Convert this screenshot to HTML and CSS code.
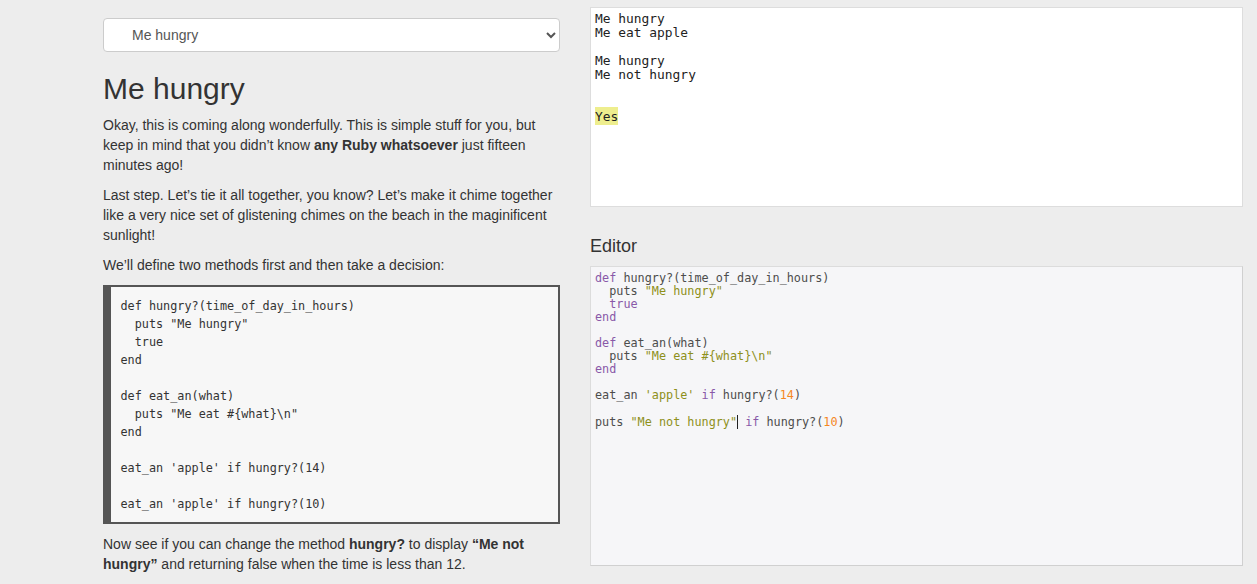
FILE: index.html
```html
<!DOCTYPE html>
<html>
<head>
<meta charset="utf-8">
<title>Me hungry</title>
<link rel="stylesheet" href="styles.css">
</head>
<body>
<div class="page">
  <div class="lesson">
    <select class="step-select">
      <option>Me hungry</option>
    </select>
    <h1 class="lesson-title">Me hungry</h1>
    <p>Okay, this is coming along wonderfully. This is simple stuff for you, but keep in mind that you didn’t know <strong>any Ruby whatsoever</strong> just fifteen minutes ago!</p>
    <p>Last step. Let’s tie it all together, you know? Let’s make it chime together like a very nice set of glistening chimes on the beach in the maginificent sunlight!</p>
    <p>We’ll define two methods first and then take a decision:</p>
<pre class="sample">def hungry?(time_of_day_in_hours)
  puts "Me hungry"
  true
end

def eat_an(what)
  puts "Me eat #{what}\n"
end

eat_an 'apple' if hungry?(14)

eat_an 'apple' if hungry?(10)</pre>
    <p>Now see if you can change the method <strong>hungry?</strong> to display <strong>“Me not hungry”</strong> and returning false when the time is less than 12.</p>
  </div>
  <div class="workspace">
<pre class="output">Me hungry
Me eat apple

Me hungry
Me not hungry


<span class="result">Yes</span></pre>
    <h2 class="editor-title">Editor</h2>
<pre class="editor"><span class="kw">def</span> hungry?(time_of_day_in_hours)
  puts <span class="str">"Me hungry"</span>
  <span class="kw">true</span>
<span class="kw">end</span>

<span class="kw">def</span> eat_an(what)
  puts <span class="str">"Me eat #{what}\n"</span>
<span class="kw">end</span>

eat_an <span class="str">'apple'</span> <span class="kw">if</span> hungry?(<span class="num">14</span>)

puts <span class="str">"Me not hungry"</span><span class="cursor"></span> <span class="kw">if</span> hungry?(<span class="num">10</span>)</pre>
  </div>
</div>
</body>
</html>
```

FILE: styles.css
```css
html, body {
  margin: 0;
  padding: 0;
}

body {
  background: #ededed;
  color: #333;
  font-family: "Liberation Sans", Arial, sans-serif;
  font-size: 14px;
  line-height: 20px;
}

.page {
  display: flex;
  gap: 30px;
  padding-left: 103px;
  padding-right: 14px;
}

.lesson {
  width: 457px;
  flex: none;
  padding-top: 18px;
}

.step-select {
  display: block;
  width: 100%;
  height: 34px;
  box-sizing: border-box;
  border: 1px solid #ccc;
  border-radius: 4px;
  background-color: #fff;
  color: #555;
  font-family: "Liberation Sans", Arial, sans-serif;
  font-size: 14px;
  padding: 0 6px 0 24px;
  margin: 0;
}

.lesson-title {
  font-size: 30px;
  font-weight: normal;
  line-height: 33px;
  margin: 20px 0 10px;
  color: #333;
}

.lesson p {
  margin: 0 0 10px;
}

.sample {
  margin: 0 0 10px;
  background: #f7f7f7;
  border: 2px solid #555;
  border-left-width: 8px;
  padding: 9.5px 9.5px;
  font-family: "DejaVu Sans Mono", monospace;
  font-size: 11.8px;
  line-height: 18px;
  color: #333;
}

.workspace {
  width: 653px;
  flex: none;
  padding-top: 7px;
}

.output {
  margin: 0;
  height: 200px;
  box-sizing: border-box;
  background: #fff;
  border: 1px solid #ddd;
  padding: 4px 4px;
  font-family: "DejaVu Sans Mono", monospace;
  font-size: 12.9px;
  line-height: 14px;
  color: #222;
}

.result {
  background: #eeee8e;
  padding: 2px 0 1px;
}

.editor-title {
  font-size: 18px;
  font-weight: normal;
  line-height: 20px;
  margin: 29px 0 10px;
  color: #333;
}

.editor {
  margin: 0;
  height: 300px;
  box-sizing: border-box;
  background: #f6f6f8;
  border: 1px solid #dcdcdc;
  border-right-color: #d0d0d0;
  border-bottom-color: #d0d0d0;
  padding: 5px 4px 4px;
  font-family: "DejaVu Sans Mono", monospace;
  font-size: 11.8px;
  line-height: 13px;
  color: #4d4d4c;
}

.kw { color: #8959a8; }
.str { color: #8e901a; }
.num { color: #f5871f; }

.cursor {
  display: inline-block;
  width: 0;
  height: 14px;
  border-left: 1px solid #222;
  vertical-align: -3px;
}
```
